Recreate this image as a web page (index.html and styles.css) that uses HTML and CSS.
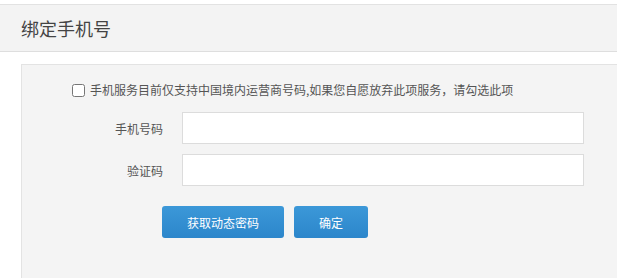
FILE: index.html
```html
<!DOCTYPE html>
<html lang="zh-CN">
<head>
<meta charset="utf-8">
<title>绑定手机号</title>
<link rel="stylesheet" href="styles.css">
</head>
<body>
<div class="page">
  <div class="header"><h1 class="title">绑定手机号</h1></div>
  <div class="panel">
    <label class="notice"><input type="checkbox" class="check"><span>手机服务目前仅支持中国境内运营商号码,如果您自愿放弃此项服务，请勾选此项</span></label>
    <div class="row">
      <span class="label">手机号码</span>
      <input type="text" class="field">
    </div>
    <div class="row">
      <span class="label">验证码</span>
      <input type="text" class="field">
    </div>
    <div class="actions">
      <button class="btn btn-code">获取动态密码</button>
      <button class="btn btn-ok">确定</button>
    </div>
  </div>
</div>
</body>
</html>
```
FILE: styles.css
```css
html, body {
  margin: 0;
  padding: 0;
  background: #ffffff;
  font-family: "Noto Sans CJK SC", "Noto Sans", sans-serif;
  color: #555;
  overflow: hidden;
}
.page {
  padding-top: 4px;
}
.header {
  background: #f3f3f3;
  border-top: 1px solid #e2e2e2;
  border-bottom: 1px solid #dedede;
  height: 46px;
  display: flex;
  align-items: center;
  padding-left: 21px;
}
.title {
  margin: 0;
  font-size: 18px;
  font-weight: normal;
  color: #444;
  line-height: 20px;
}
.panel {
  margin: 12px 0 0 21px;
  background: #f4f4f4;
  border: 1px solid #e3e3e3;
  border-right: none;
  border-bottom: none;
  height: 214px;
  padding-top: 17px;
  box-sizing: border-box;
}
.notice {
  display: flex;
  align-items: center;
  margin-left: 50px;
  font-size: 12px;
  line-height: 16px;
  color: #555;
}
.check {
  margin: 0 5px 0 0;
  width: 13px;
  height: 13px;
}
.row {
  display: flex;
  align-items: center;
  margin-top: 14px;
}
.row + .row {
  margin-top: 10px;
}
.label {
  width: 141px;
  text-align: right;
  font-size: 12px;
  color: #555;
}
.field {
  margin-left: 19px;
  width: 402px;
  height: 32px;
  box-sizing: border-box;
  border: 1px solid #dcdcdc;
  background: #fff;
  outline: none;
}
.actions {
  display: flex;
  gap: 10px;
  margin-top: 20px;
  margin-left: 140px;
}
.btn {
  height: 32px;
  border: none;
  border-radius: 3px;
  background: linear-gradient(#3c98d8, #2c86cb);
  color: #fff;
  font-family: "Noto Sans CJK SC", sans-serif;
  font-size: 12px;
  padding: 0;
}
.btn-code { width: 122px; }
.btn-ok { width: 74px; }
```
